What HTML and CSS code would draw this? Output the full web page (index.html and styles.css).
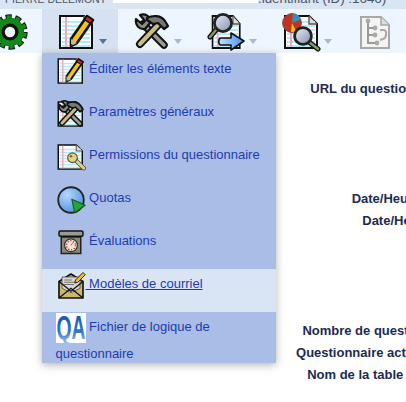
FILE: index.html
```html
<!DOCTYPE html>
<html lang="fr">
<head>
    <meta charset="UTF-8">
    <meta name="viewport" content="width=device-width, initial-scale=1.0">
    <title>Questionnaire</title>
    <link rel="stylesheet" href="styles.css">
</head>
<body>

    <!-- shared icons -->
    <svg class="sprite" xmlns="http://www.w3.org/2000/svg">
        <defs>
            <linearGradient id="lens" x1="0" y1="0" x2="1" y2="1">
                <stop offset="0" stop-color="#eef0f8"/>
                <stop offset="1" stop-color="#7f8db0"/>
            </linearGradient>
            <linearGradient id="arrow" x1="0" y1="0" x2="1" y2="0">
                <stop offset="0" stop-color="#bfe0ff"/>
                <stop offset="1" stop-color="#3f94f0"/>
            </linearGradient>
            <linearGradient id="qa" x1="0" y1="0" x2="0" y2="1">
                <stop offset="0" stop-color="#0e4ba8"/>
                <stop offset="0.6" stop-color="#2f74c8"/>
                <stop offset="1" stop-color="#b8d2ee"/>
            </linearGradient>
            <radialGradient id="globe" cx="0.35" cy="0.3" r="0.8">
                <stop offset="0" stop-color="#b5d8fb"/>
                <stop offset="1" stop-color="#4a8fdc"/>
            </radialGradient>
        </defs>

        <symbol id="page" viewBox="0 0 40 40">
            <path d="M3 4h24l8 8v24H3z" fill="#fff" stroke="#111" stroke-width="2"/>
            <path d="M5 10h28M5 14h28M5 18h28M5 22h28M5 26h28M5 30h28M5 34h28" stroke="#b4ecf5" stroke-width="1.8"/>
            <path d="M9 5v30" stroke="#f2a8ba" stroke-width="2"/>
            <path d="M27 4v8h8" fill="#ddd" stroke="#555" stroke-width="1.4"/>
        </symbol>

        <symbol id="pencil" viewBox="0 0 40 40">
            <path d="M30 4l6 4-16 23-6 3 0-7z" fill="#f2c316" stroke="#111" stroke-width="2.6" stroke-linejoin="round"/>
            <path d="M30 4l6 4-2.5 3.5-6-4z" fill="#c8242c" stroke="#111" stroke-width="1.4"/>
            <path d="M14 27l6 4-6 3z" fill="#c9b78e"/>
            <path d="M14 34l2-1-2-1z" fill="#111"/>
        </symbol>

        <symbol id="tools" viewBox="0 0 40 40">
            <path d="M11 12l21 21" stroke="#111" stroke-width="7.5" stroke-linecap="round"/>
            <path d="M11 12l21 21" stroke="#9a9a92" stroke-width="3.6" stroke-linecap="round"/>
            <path d="M4 7l6 5 3-3-5-6c5-2 11 1 10 8l-5 6c-6 1-10-4-9-10z" fill="#8d8d88" stroke="#111" stroke-width="2.2" stroke-linejoin="round"/>
            <path d="M26 13L8 32" stroke="#111" stroke-width="8" stroke-linecap="round"/>
            <path d="M26 13L8 32" stroke="#c9bd83" stroke-width="4" stroke-linecap="round"/>
            <path d="M15 6c6-3 14-3 18 3l3 5-4 3-6-6-5 1-6-4z" fill="#77776f" stroke="#111" stroke-width="2.2" stroke-linejoin="round"/>
        </symbol>

        <symbol id="gear" viewBox="0 0 40 40">
            <circle cx="20" cy="20" r="15" fill="none" stroke="#111" stroke-width="5.4" stroke-dasharray="6 3.42"/>
            <circle cx="20" cy="20" r="10.5" fill="none" stroke="#111" stroke-width="7"/>
            <circle cx="20" cy="20" r="15" fill="none" stroke="#138a17" stroke-width="3.6" stroke-dasharray="4.2 5.22" stroke-dashoffset="-0.9"/>
            <circle cx="20" cy="20" r="11.2" fill="none" stroke="#138a17" stroke-width="5.4"/>
            <circle cx="20" cy="20" r="6.6" fill="#eef5fd" stroke="#111" stroke-width="2.8"/>
        </symbol>

        <symbol id="magnifier" viewBox="0 0 40 40">
            <path d="M9 18L3 25" stroke="#111" stroke-width="5" stroke-linecap="round"/>
            <path d="M9 18L3 25" stroke="#8f9a60" stroke-width="2.4" stroke-linecap="round"/>
            <circle cx="16" cy="11" r="8.6" fill="url(#lens)" stroke="#222" stroke-width="2.8"/>
        </symbol>

        <symbol id="send" viewBox="0 0 40 40">
            <path d="M14 26h10v-5l13 8-13 9v-5H14c-3 0-3-7 0-7z" fill="url(#arrow)" stroke="#111" stroke-width="1.6" stroke-linejoin="round"/>
        </symbol>

        <symbol id="key" viewBox="0 0 40 40">
            <path d="M24 22l13 13" stroke="#555" stroke-width="6" stroke-linecap="round"/>
            <path d="M24 22l13 13" stroke="#e4d27e" stroke-width="3.6" stroke-linecap="round"/>
            <circle cx="22" cy="21" r="6.4" fill="#e4d27e" stroke="#555" stroke-width="1.6"/>
            <circle cx="20" cy="19" r="1.8" fill="#7a6d35"/>
        </symbol>

        <symbol id="quota" viewBox="0 0 40 40">
            <circle cx="20" cy="20" r="17" fill="url(#globe)" stroke="#222" stroke-width="2.4"/>
            <path d="M21 19l18 8-14 10z" fill="#1fa83a" stroke="#14551f" stroke-width="1.4" stroke-linejoin="round"/>
        </symbol>

        <symbol id="balance" viewBox="0 0 40 40">
            <rect x="7" y="12" width="26" height="22" fill="#8a8878" stroke="#222" stroke-width="2"/>
            <rect x="4" y="4" width="32" height="7" rx="2" fill="#9a9a8e" stroke="#111" stroke-width="2"/>
            <circle cx="20" cy="23" r="8.6" fill="#efe6d6" stroke="#333" stroke-width="1.6"/>
            <circle cx="20" cy="23" r="6" fill="none" stroke="#c8402c" stroke-width="2" stroke-dasharray="1.6 2.2"/>
            <path d="M20 23l3-4" stroke="#c8402c" stroke-width="1.2"/>
        </symbol>

        <symbol id="mail" viewBox="0 0 40 40">
            <path d="M4 14L20 4l16 10v22H4z" fill="#cbb968" stroke="#111" stroke-width="2.2" stroke-linejoin="round"/>
            <path d="M8 8h24v15l-12 6-12-6z" fill="#d8d8d2" stroke="#444" stroke-width="1"/>
            <path d="M11 12h10M11 15h15M11 18h13" stroke="#666" stroke-width="1.2"/>
            <path d="M4 36l16-13 16 13M4 14l16 13 16-13" fill="none" stroke="#111" stroke-width="1.8"/>
            <path d="M36 2l3 3-10 10-4 1 1-4z" fill="#f2c316" stroke="#111" stroke-width="1.2"/>
        </symbol>
    </svg>

    <div class="topbar">
        <span class="topbar-user">PIERRE DELEMONT</span>
        <span class="topbar-select"></span>
        <span class="topbar-id">.identifiant (ID) :1646)</span>
    </div>

    <div class="toolbar">
        <div class="tool tool-gear">
            <svg class="tool-icon"><use href="#gear"/></svg>
        </div>

        <div class="tool tool-open">
            <svg class="tool-icon"><use href="#page"/><use href="#pencil"/></svg>
            <span class="caret caret-dark"></span>

            <ul class="menu">
                <li class="menu-item">
                    <a href="#"><svg class="menu-icon"><use href="#page"/><use href="#pencil"/></svg> Éditer les éléments texte</a>
                </li>
                <li class="menu-item">
                    <a href="#"><svg class="menu-icon"><use href="#page"/><use href="#tools"/></svg> Paramètres généraux</a>
                </li>
                <li class="menu-item">
                    <a href="#"><svg class="menu-icon"><use href="#page"/><use href="#key"/></svg> Permissions du questionnaire</a>
                </li>
                <li class="menu-item">
                    <a href="#"><svg class="menu-icon"><use href="#quota"/></svg> Quotas</a>
                </li>
                <li class="menu-item">
                    <a href="#"><svg class="menu-icon"><use href="#balance"/></svg> Évaluations</a>
                </li>
                <li class="menu-item menu-item-hover">
                    <a href="#"><svg class="menu-icon"><use href="#mail"/></svg> Modèles de courriel</a>
                </li>
                <li class="menu-item menu-item-tall">
                    <a href="#"><svg class="menu-icon menu-icon-qa" viewBox="0 0 30 30"><rect width="30" height="30" fill="#fff"/><text class="qa-text" x="0.5" y="26" textLength="29" lengthAdjust="spacingAndGlyphs">QA</text></svg> Fichier de logique de questionnaire</a>
                </li>
            </ul>
        </div>

        <div class="tool">
            <svg class="tool-icon"><use href="#tools"/></svg>
            <span class="caret"></span>
        </div>

        <div class="tool">
            <svg class="tool-icon">
                <svg x="3" width="34" height="40" viewBox="0 0 40 40" preserveAspectRatio="none"><use href="#page"/></svg>
                <use href="#magnifier"/><use href="#send"/>
            </svg>
            <span class="caret"></span>
        </div>

        <div class="tool">
            <svg class="tool-icon" viewBox="0 0 40 40">
                <use href="#page"/>
                <circle cx="10" cy="11" r="9.4" fill="#c8301e" stroke="#555" stroke-width="1"/>
                <path d="M10 11l1-9.4a9.4 9.4 0 0 1 8 6z" fill="#2f8fc0"/>
                <path d="M10 11l-1 9a9 9 0 0 0 5-1z" fill="#e8c81c"/>
                <path d="M27 30l9 7" stroke="#111" stroke-width="5" stroke-linecap="round"/>
                <path d="M27 30l9 7" stroke="#8f9a60" stroke-width="2.4" stroke-linecap="round"/>
                <circle cx="21" cy="24" r="8.4" fill="url(#lens)" stroke="#222" stroke-width="2.8"/>
            </svg>
            <span class="caret"></span>
        </div>

        <div class="tool">
            <svg class="tool-icon" viewBox="0 0 40 40">
                <path d="M4 5h20l8 8v23H4z" fill="#f4f4f2" stroke="#a8a8a8" stroke-width="2"/>
                <path d="M24 5v8h8" fill="#ddd" stroke="#a8a8a8" stroke-width="1.6"/>
                <path d="M11 8v24M11 16h6M11 23h6M11 31h8" stroke="#999" stroke-width="2" fill="none"/>
                <circle cx="11" cy="9" r="2.4" fill="#aaa"/>
                <circle cx="18" cy="16" r="2.4" fill="#aaa"/>
                <circle cx="18" cy="23" r="2.4" fill="#aaa"/>
                <circle cx="20" cy="31" r="2.4" fill="#aaa"/>
                <path d="M23 18h4c3 0 3 8-1 9l-3 1" stroke="#a8a8a8" stroke-width="2" fill="none"/>
            </svg>
        </div>
    </div>

    <div class="info">
        <div class="info-group">
            <div class="info-label">URL du questionnaire actif &thinsp;:</div>
        </div>
        <div class="info-group">
            <div class="info-label">Date/Heure de début :</div>
            <div class="info-label">Date/Heure d'arrêt&nbsp;&nbsp;:</div>
        </div>
        <div class="info-group">
            <div class="info-label">Nombre de questions/blocs&nbsp;&thinsp;&thinsp;:</div>
            <div class="info-label">Questionnaire activé ou non&nbsp;&nbsp;&nbsp;:</div>
            <div class="info-label">Nom de la table de sondage&thinsp;:</div>
        </div>
    </div>

</body>
</html>
```

FILE: styles.css
```css
/* General Styles */
body {
    margin: 0;
    height: 402px;
    overflow: hidden;
    background: #fff;
    font-family: "Liberation Sans", Arial, sans-serif;
    font-size: 13px;
    color: #1d2b4f;
}

.sprite {
    display: block;
    width: 0;
    height: 0;
}

/* Top strip, mostly scrolled out of view */
.topbar {
    display: flex;
    height: 9px;
    overflow: hidden;
    background: #dae5f3;
    color: #4a5568;
    line-height: 9px;
}

.topbar-user {
    width: 113px;
    padding-left: 5px;
    box-sizing: border-box;
    margin-top: -5px;
    font-size: 10.6px;
    white-space: nowrap;
}

.topbar-select {
    width: 145px;
    height: 3px;
    background: #fff;
}

.topbar-id {
    margin-top: -6px;
    font-size: 13.33px;
    white-space: nowrap;
}

/* Toolbar */
.toolbar {
    display: flex;
    height: 44px;
    background: #edf5fe;
}

.tool {
    display: flex;
    align-items: flex-start;
    flex: none;
    width: 75px;
    padding: 3px 0 0 14px;
    box-sizing: border-box;
}

.tool-gear {
    width: 42px;
    padding-left: 0;
}

.tool-gear .tool-icon {
    margin-left: -10px;
}

.tool-open {
    position: relative;
    width: 76px;
    padding-left: 15px;
    background: #d6e2f1;
}

.tool-icon {
    flex: none;
    width: 40px;
    height: 40px;
}

.caret {
    margin: 27px 0 0 2px;
    border-style: solid;
    border-width: 5px 4.5px 0;
    border-color: #a9b6d2 transparent transparent;
}

.caret-dark {
    border-top-color: #54709f;
}

/* Dropdown */
.menu {
    position: absolute;
    top: 100%;
    left: 0;
    width: 234px;
    margin: 0;
    padding: 1px 0 0;
    list-style: none;
    background: #a9bde6;
    box-shadow: 0 2px 8px rgba(0, 0, 0, 0.3);
    line-height: 27px;
}

.menu-item {
    height: 42px;
    padding: 1px 0 0 13.5px;
}

.menu-item a {
    color: #1e3cae;
    text-decoration: none;
}

.menu-item-hover {
    background: #d9e5f5;
}

.menu-item-hover a {
    text-decoration: underline;
}

.menu-item-tall {
    height: 50px;
}

.menu-icon {
    width: 30px;
    height: 30px;
    margin: 1px 0 -6px;
    vertical-align: top;
}

.menu-icon-qa {
    margin-top: 0;
}

.qa-text {
    font-size: 33px;
    font-weight: bold;
    fill: url(#qa);
}

/* Labels behind the menu, cut off by the window */
.info {
    width: 486px;
    text-align: right;
    font-weight: bold;
    line-height: 22px;
}

.info-group {
    margin-top: 88px;
}

.info-group:first-child {
    margin-top: 25px;
}

.info-label {
    white-space: nowrap;
}
```
